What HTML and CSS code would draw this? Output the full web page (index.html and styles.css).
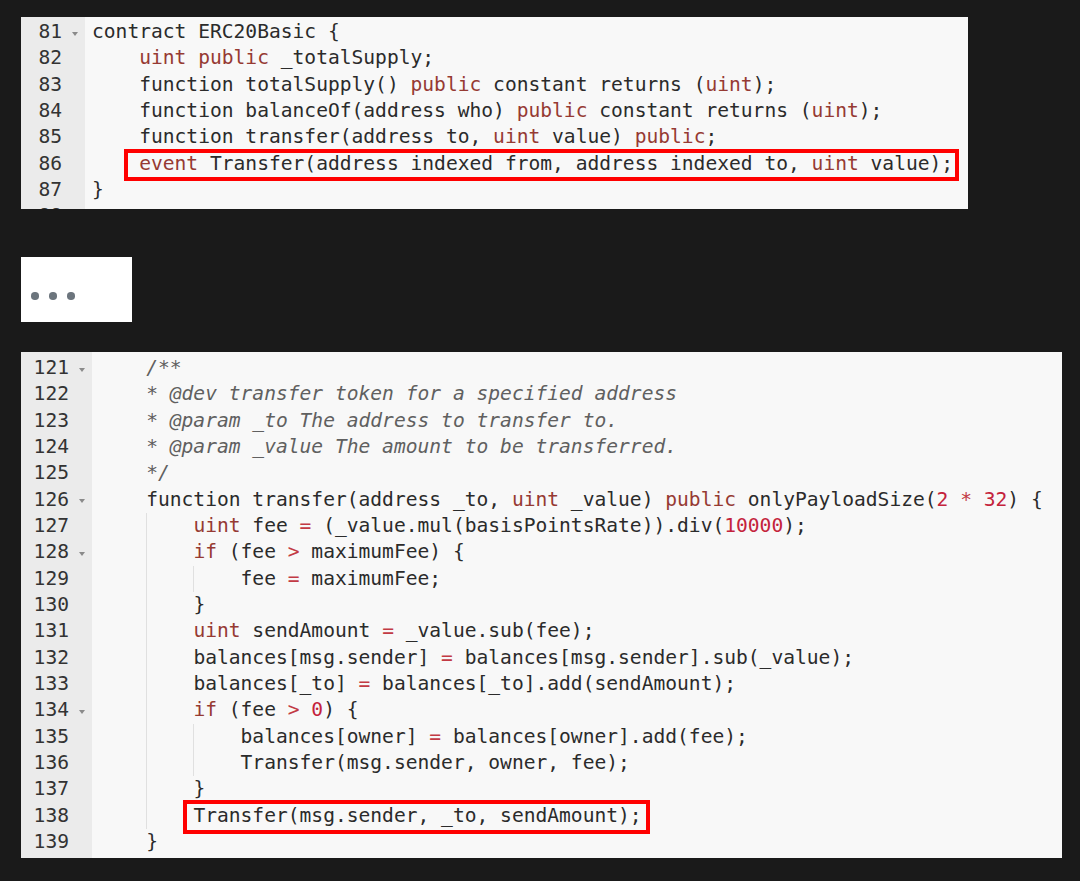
FILE: index.html
```html
<!DOCTYPE html>
<html>
<head>
<meta charset="utf-8">
<link rel="stylesheet" href="styles.css">
</head>
<body>
<div class="page">
  <div class="panel panel-top">
    <div class="gutter">
      <div class="ln">81<span class="fold"><i></i></span></div>
      <div class="ln">82<span class="fold"></span></div>
      <div class="ln">83<span class="fold"></span></div>
      <div class="ln">84<span class="fold"></span></div>
      <div class="ln">85<span class="fold"></span></div>
      <div class="ln">86<span class="fold"></span></div>
      <div class="ln">87<span class="fold"></span></div>
      <div class="ln">88<span class="fold"></span></div>
    </div>
    <div class="code">
      <div class="line">contract ERC20Basic {</div>
      <div class="line"><span class="i">    </span><span class="k">uint</span> <span class="k">public</span> _totalSupply;</div>
      <div class="line"><span class="i">    </span>function totalSupply() <span class="k">public</span> constant returns (<span class="k">uint</span>);</div>
      <div class="line"><span class="i">    </span>function balanceOf(address who) <span class="k">public</span> constant returns (<span class="k">uint</span>);</div>
      <div class="line"><span class="i">    </span>function transfer(address to, <span class="k">uint</span> value) <span class="k">public</span>;</div>
      <div class="line"><span class="i">    </span><span class="hl hl-a"><span class="k">event</span> Transfer(address indexed from, address indexed to, <span class="k">uint</span> value);</span></div>
      <div class="line">}</div>
      <div class="line"> </div>
    </div>
  </div>

  <div class="more">
    <span class="dot"></span><span class="dot"></span><span class="dot"></span>
  </div>

  <div class="panel panel-bottom">
    <div class="gutter">
      <div class="ln">121<span class="fold"><i></i></span></div>
      <div class="ln">122<span class="fold"></span></div>
      <div class="ln">123<span class="fold"></span></div>
      <div class="ln">124<span class="fold"></span></div>
      <div class="ln">125<span class="fold"></span></div>
      <div class="ln">126<span class="fold"><i></i></span></div>
      <div class="ln">127<span class="fold"></span></div>
      <div class="ln">128<span class="fold"><i></i></span></div>
      <div class="ln">129<span class="fold"></span></div>
      <div class="ln">130<span class="fold"></span></div>
      <div class="ln">131<span class="fold"></span></div>
      <div class="ln">132<span class="fold"></span></div>
      <div class="ln">133<span class="fold"></span></div>
      <div class="ln">134<span class="fold"><i></i></span></div>
      <div class="ln">135<span class="fold"></span></div>
      <div class="ln">136<span class="fold"></span></div>
      <div class="ln">137<span class="fold"></span></div>
      <div class="ln">138<span class="fold"></span></div>
      <div class="ln">139<span class="fold"></span></div>
    </div>
    <div class="code">
      <div class="line"><span class="i">    </span><span class="c">/**</span></div>
      <div class="line"><span class="i">    </span><span class="c">* @dev transfer token for a specified address</span></div>
      <div class="line"><span class="i">    </span><span class="c">* @param _to The address to transfer to.</span></div>
      <div class="line"><span class="i">    </span><span class="c">* @param _value The amount to be transferred.</span></div>
      <div class="line"><span class="i">    </span><span class="c">*/</span></div>
      <div class="line"><span class="i">    </span>function transfer(address _to, <span class="k">uint</span> _value) <span class="k">public</span> onlyPayloadSize(<span class="n">2</span> <span class="o">*</span> <span class="n">32</span>) {</div>
      <div class="line"><span class="i">    </span><span class="i g">    </span><span class="k">uint</span> fee <span class="o">=</span> (_value.mul(basisPointsRate)).div(<span class="n">10000</span>);</div>
      <div class="line"><span class="i">    </span><span class="i g">    </span><span class="k">if</span> (fee <span class="o">&gt;</span> maximumFee) {</div>
      <div class="line"><span class="i">    </span><span class="i g">    </span><span class="i g">    </span>fee <span class="o">=</span> maximumFee;</div>
      <div class="line"><span class="i">    </span><span class="i g">    </span>}</div>
      <div class="line"><span class="i">    </span><span class="i g">    </span><span class="k">uint</span> sendAmount <span class="o">=</span> _value.sub(fee);</div>
      <div class="line"><span class="i">    </span><span class="i g">    </span>balances[msg.sender] <span class="o">=</span> balances[msg.sender].sub(_value);</div>
      <div class="line"><span class="i">    </span><span class="i g">    </span>balances[_to] <span class="o">=</span> balances[_to].add(sendAmount);</div>
      <div class="line"><span class="i">    </span><span class="i g">    </span><span class="k">if</span> (fee <span class="o">&gt;</span> <span class="n">0</span>) {</div>
      <div class="line"><span class="i">    </span><span class="i g">    </span><span class="i g">    </span>balances[owner] <span class="o">=</span> balances[owner].add(fee);</div>
      <div class="line"><span class="i">    </span><span class="i g">    </span><span class="i g">    </span>Transfer(msg.sender, owner, fee);</div>
      <div class="line"><span class="i">    </span><span class="i g">    </span>}</div>
      <div class="line"><span class="i">    </span><span class="i g">    </span><span class="hl hl-b">Transfer(msg.sender, _to, sendAmount);</span></div>
      <div class="line"><span class="i">    </span>}</div>
    </div>
  </div>
</div>
</body>
</html>
```

FILE: styles.css
```css
html, body {
  margin: 0;
  padding: 0;
}

body {
  background: #1a1a1a;
  width: 1080px;
  height: 881px;
  overflow: hidden;
}

.page {
  display: flex;
  flex-direction: column;
  align-items: flex-start;
  padding: 17px 0 0 21px;
}

.panel {
  display: flex;
  background: #f8f8f8;
  overflow: hidden;
  font-family: "DejaVu Sans Mono", "Liberation Mono", monospace;
  font-size: 19.6px;
  line-height: 26.33px;
  color: #2b2b2b;
}

.panel-top {
  width: 947px;
  height: 192px;
}

.panel-bottom {
  width: 1041px;
  height: 506px;
  margin-top: 30px;
}

.gutter {
  flex: none;
  background: #ebebeb;
  color: #333;
}

.panel-top .gutter {
  width: 64px;
  padding-top: 2px;
}

.panel-bottom .gutter {
  width: 71px;
  padding-top: 3px;
}

.ln {
  display: flex;
  justify-content: flex-end;
  align-items: center;
  height: 26.33px;
}

.fold {
  flex: none;
  width: 23px;
  height: 26.33px;
  box-sizing: border-box;
  padding-left: 10px;
  display: flex;
  align-items: center;
}

.fold i {
  display: block;
  width: 0;
  height: 0;
  margin-top: 3px;
  border-left: 3.5px solid transparent;
  border-right: 3.5px solid transparent;
  border-top: 4px solid #8a8a8a;
}

.code {
  flex: 1;
  padding-left: 7px;
}

.panel-top .code {
  padding-top: 2px;
}

.panel-bottom .code {
  padding-top: 3px;
}

.line {
  height: 26.33px;
  white-space: pre;
}

.i {
  display: inline-block;
  height: 26.33px;
  vertical-align: top;
}

.g {
  background: linear-gradient(#e0e0e0, #e0e0e0) left top / 1px 100% no-repeat;
}

.k {
  color: #963a33;
}

.n {
  color: #c4233c;
}

.o {
  color: #c23a44;
}

.c {
  color: #606060;
  font-style: italic;
}

.hl {
  position: relative;
}

.hl::after {
  content: "";
  position: absolute;
  border: 4px solid #ff0000;
}

.hl-a::after {
  top: -3px;
  bottom: -6px;
  left: -15px;
  right: -6px;
}

.hl-b::after {
  top: -4px;
  bottom: -7px;
  left: -10px;
  right: -8px;
}

.more {
  width: 111px;
  height: 65px;
  margin-top: 48px;
  background: #ffffff;
  box-sizing: border-box;
  padding: 35px 0 0 10px;
  display: flex;
  align-items: flex-start;
  gap: 10.5px;
}

.dot {
  width: 7.5px;
  height: 7.5px;
  border-radius: 50%;
  background: #6c757d;
}
```
